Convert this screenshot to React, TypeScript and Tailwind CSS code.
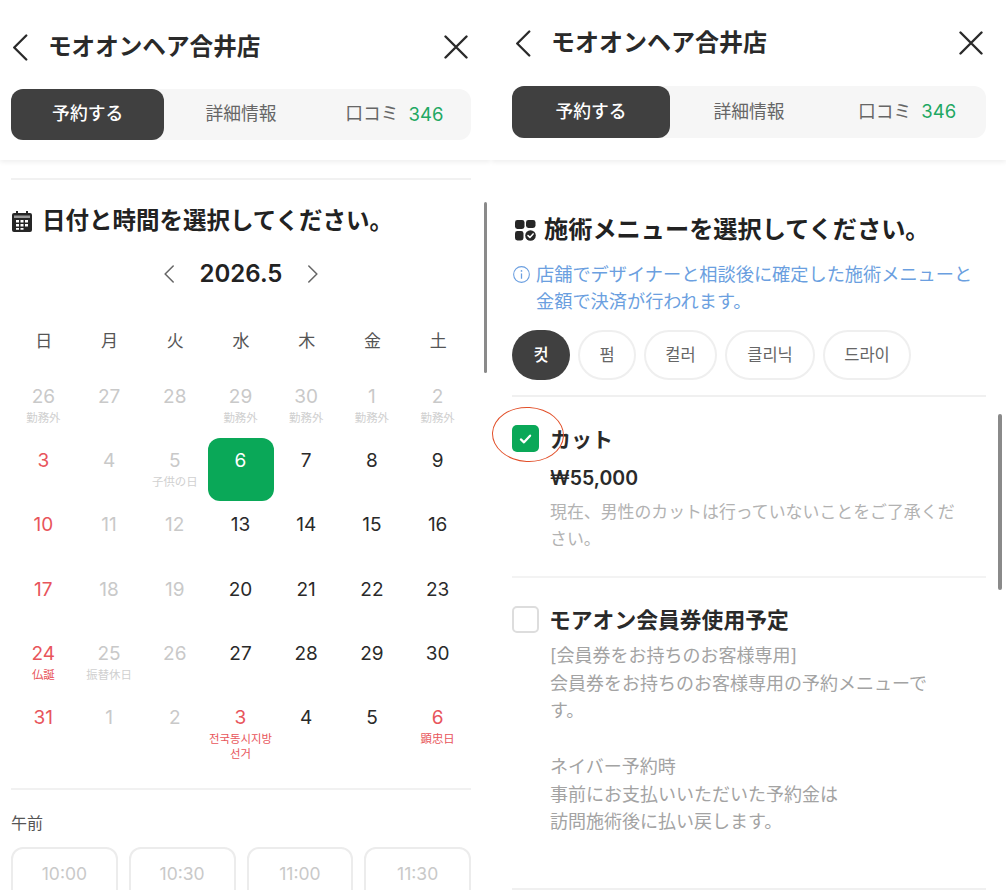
const weekdays = ['日', '月', '火', '水', '木', '金', '土']

type Tone = 'off' | 'on' | 'red' | 'selected'
type Day = { d: number; tone: Tone; label?: string[] }

const weeks: Day[][] = [
  [
    { d: 26, tone: 'off', label: ['勤務外'] },
    { d: 27, tone: 'off' },
    { d: 28, tone: 'off' },
    { d: 29, tone: 'off', label: ['勤務外'] },
    { d: 30, tone: 'off', label: ['勤務外'] },
    { d: 1, tone: 'off', label: ['勤務外'] },
    { d: 2, tone: 'off', label: ['勤務外'] },
  ],
  [
    { d: 3, tone: 'red' },
    { d: 4, tone: 'off' },
    { d: 5, tone: 'off', label: ['子供の日'] },
    { d: 6, tone: 'selected' },
    { d: 7, tone: 'on' },
    { d: 8, tone: 'on' },
    { d: 9, tone: 'on' },
  ],
  [
    { d: 10, tone: 'red' },
    { d: 11, tone: 'off' },
    { d: 12, tone: 'off' },
    { d: 13, tone: 'on' },
    { d: 14, tone: 'on' },
    { d: 15, tone: 'on' },
    { d: 16, tone: 'on' },
  ],
  [
    { d: 17, tone: 'red' },
    { d: 18, tone: 'off' },
    { d: 19, tone: 'off' },
    { d: 20, tone: 'on' },
    { d: 21, tone: 'on' },
    { d: 22, tone: 'on' },
    { d: 23, tone: 'on' },
  ],
  [
    { d: 24, tone: 'red', label: ['仏誕'] },
    { d: 25, tone: 'off', label: ['振替休日'] },
    { d: 26, tone: 'off' },
    { d: 27, tone: 'on' },
    { d: 28, tone: 'on' },
    { d: 29, tone: 'on' },
    { d: 30, tone: 'on' },
  ],
  [
    { d: 31, tone: 'red' },
    { d: 1, tone: 'off' },
    { d: 2, tone: 'off' },
    { d: 3, tone: 'red', label: ['전국동시지방', '선거'] },
    { d: 4, tone: 'on' },
    { d: 5, tone: 'on' },
    { d: 6, tone: 'red', label: ['顕忠日'] },
  ],
]

const toneText: Record<Tone, string> = {
  off: 'text-[#c9c9c9]',
  on: 'text-[#2a2a2a]',
  red: 'text-[#e8555b]',
  selected: 'text-white',
}

const toneLabel: Record<Tone, string> = {
  off: 'text-[#d0d0d0]',
  on: 'text-[#2a2a2a]',
  red: 'text-[#e8555b]',
  selected: 'text-white',
}

function Chevron({ dir, className }: { dir: 'left' | 'right'; className: string }) {
  return (
    <svg viewBox="0 0 16 28" className={className} fill="none" stroke="currentColor" strokeWidth="2.4" strokeLinecap="round" strokeLinejoin="round">
      <path d={dir === 'left' ? 'M14.5 1.5 2 14l12.5 12.5' : 'M1.5 1.5 14 14 1.5 26.5'} />
    </svg>
  )
}

function Header({ tall }: { tall: boolean }) {
  return (
    <div className="h-[160px] shadow-[0_2px_5px_rgba(0,0,0,0.07)]">
      <div className={tall ? 'flex h-[89px] items-center pt-[5px] pl-[11px] pr-[20px]' : 'flex h-[86px] items-center pl-[21px] pr-[20px]'}>
        <Chevron dir="left" className={tall ? 'ml-[1px] h-[27px] w-[16px] text-[#2a2a2a]' : 'ml-[3px] h-[27px] w-[16px] text-[#2a2a2a]'} />
        <span className={tall ? 'ml-[20px] text-[23.6px] font-semibold text-[#2a2a2a]' : 'ml-[20px] text-[24px] font-semibold text-[#2a2a2a]'}>モオオンヘア合井店</span>
        <svg viewBox="0 0 24 24" className="ml-auto mr-[3px] h-[24px] w-[24px] text-[#2a2a2a]" fill="none" stroke="currentColor" strokeWidth="2.4" strokeLinecap="round">
          <path d="M1.5 1.5 22.5 22.5M22.5 1.5 1.5 22.5" />
        </svg>
      </div>
      <div className={tall ? 'ml-[11px] mr-[20px] grid h-[51px] grid-cols-3 rounded-[12px] bg-[#f6f6f6]' : 'ml-[21px] mr-[20px] grid h-[52px] grid-cols-3 rounded-[12px] bg-[#f6f6f6]'}>
        <div className="flex items-center justify-center rounded-[12px] bg-[#404040] text-[17.8px] font-medium text-white">予約する</div>
        <div className="flex items-center justify-center text-[17.8px] text-[#666666]">詳細情報</div>
        <div className="flex items-center justify-center gap-[10px] text-[17.8px] text-[#666666]">
          <span>口コミ</span>
          <span className="text-[18.5px] text-[#1fa863]">346</span>
        </div>
      </div>
    </div>
  )
}

function CalendarPanel() {
  return (
    <div className="relative h-[890px] w-[491px] shrink-0 overflow-hidden">
      <Header tall />
      <div className="pl-[11px] pr-[20px]">
        <div className="mt-[18px] h-[2px] bg-[#f1f1f1]" />
        <div className="mt-[25px] flex h-[32px] items-center">
          <svg viewBox="0 0 20 21" className="ml-[1px] h-[21px] w-[20px]">
            <path fill="#262626" d="M4 0h2v2h8V0h2v2h2a2 2 0 0 1 2 2v15a2 2 0 0 1-2 2H2a2 2 0 0 1-2-2V4a2 2 0 0 1 2-2h2Z" />
            <path fill="#9a9a9a" d="M2 4.5h16V7H2z" />
            <path fill="#fff" d="M4 9h3v2.5H4zM8.5 9h3v2.5h-3zM13 9h3v2.5h-3zM4 13h3v2.5H4zM8.5 13h3v2.5h-3zM13 13h3v2.5h-3zM4 17h3v1.8H4zM8.5 17h3v1.8h-3z" />
          </svg>
          <h2 className="ml-[10px] text-[23.5px] font-semibold text-[#222222]">日付と時間を選択してください。</h2>
        </div>
        <div className="mt-[21px] flex h-[32px] items-center justify-center">
          <Chevron dir="left" className="h-[18px] w-[12px] text-[#666666]" />
          <span className="mx-[25px] text-[24px] font-semibold text-[#222222]">2026.5</span>
          <Chevron dir="right" className="h-[18px] w-[12px] text-[#666666]" />
        </div>
        <div className="mt-[39px] grid h-[24px] grid-cols-7 items-center text-center text-[17px] text-[#555555]">
          {weekdays.map((w) => (
            <span key={w}>{w}</span>
          ))}
        </div>
        <div className="mt-[20px]">
          {weeks.map((week, i) => (
            <div key={i} className="grid h-[64.2px] grid-cols-7">
              {week.map((day, j) => (
                <div key={j} className={day.tone === 'selected' ? 'mt-[1px] rounded-[12px] bg-[#0aa858] pr-[1px] pt-[11px] text-center' : 'pr-[1px] pt-[12px] text-center'}>
                  <div className={`text-[19px] leading-[24px] ${toneText[day.tone]}`}>{day.d}</div>
                  {day.label && (
                    <div className={`-mx-[2px] mt-[2px] whitespace-nowrap text-[11.4px] leading-[15px] ${toneLabel[day.tone]}`}>
                      {day.label.map((line) => (
                        <div key={line}>{line}</div>
                      ))}
                    </div>
                  )}
                </div>
              ))}
            </div>
          ))}
        </div>
        <div className="mt-[30px] h-[2px] bg-[#f1f1f1]" />
        <div className="mt-[21px] text-[16px] leading-[24px] text-[#555555]">午前</div>
        <div className="mt-[12px] grid grid-cols-4 gap-[11px]">
          {['10:00', '10:30', '11:00', '11:30'].map((t) => (
            <div key={t} className="flex h-[54px] items-center justify-center rounded-[12px] border-2 border-[#ececec] text-[17.5px] text-[#c9c9c9]">{t}</div>
          ))}
        </div>
      </div>
      <div className="absolute left-[484px] top-[202px] h-[171px] w-[3px] rounded-full bg-[#8a8a8a]" />
    </div>
  )
}

function CheckBox({ on }: { on: boolean }) {
  if (on) {
    return (
      <div className="flex h-[27px] w-[27px] shrink-0 items-center justify-center rounded-[5px] bg-[#0aa858]">
        <svg viewBox="0 0 14 12" className="h-[10px] w-[13px]" fill="none" stroke="#fff" strokeWidth="2.7" strokeLinecap="round" strokeLinejoin="round">
          <path d="M1.5 6.5 5.2 10 12.5 2" />
        </svg>
      </div>
    )
  }
  return <div className="h-[27px] w-[27px] shrink-0 rounded-[5px] border-2 border-[#dddddd]" />
}

function MenuPanel() {
  return (
    <div className="relative h-[890px] flex-1 overflow-hidden">
      <Header tall={false} />
      <div className="pl-[21px] pr-[20px]">
        <div className="mt-[54px] flex h-[32px] items-center">
          <svg viewBox="0 0 21 21" className="ml-[3px] h-[21px] w-[21px] text-[#262626]" fill="currentColor">
            <rect x="0" y="0" width="9.5" height="9" rx="2.4" />
            <rect x="11" y="0" width="9.5" height="8" rx="2.4" />
            <rect x="0" y="11" width="8.5" height="9.5" rx="2.4" />
            <circle cx="15.5" cy="15.5" r="5.3" />
            <path d="m13 15.6 1.9 1.8 3.2-3.5" fill="none" stroke="#fff" strokeWidth="1.5" strokeLinecap="round" strokeLinejoin="round" />
          </svg>
          <h2 className="ml-[8px] text-[24.2px] font-semibold text-[#222222]">施術メニューを選択してください。</h2>
        </div>
        <div className="mt-[15px] flex text-[18.2px] leading-[27px] text-[#6b9fe0]">
          <svg viewBox="0 0 16 16" className="ml-[1px] mt-[5px] h-[17px] w-[17px] shrink-0" fill="none" stroke="currentColor" strokeWidth="1">
            <circle cx="8" cy="8" r="7.4" />
            <path d="M8 7v5" strokeWidth="1.2" />
            <circle cx="8" cy="4.6" r="0.8" fill="currentColor" stroke="none" />
          </svg>
          <p className="ml-[6px]">
            店舗でデザイナーと相談後に確定した施術メニューと<br />金額で決済が行われます。
          </p>
        </div>
        <div className="mt-[15px] flex gap-[8px]">
          <div className="flex h-[50px] w-[58px] items-center justify-center rounded-full bg-[#404040] text-[16.5px] font-medium text-white">컷</div>
          <div className="flex h-[50px] w-[58px] items-center justify-center rounded-full border-2 border-[#efefef] text-[16.5px] text-[#666666]">펌</div>
          <div className="flex h-[50px] w-[73px] items-center justify-center rounded-full border-2 border-[#efefef] text-[16.5px] text-[#666666]">컬러</div>
          <div className="flex h-[50px] w-[90px] items-center justify-center rounded-full border-2 border-[#efefef] text-[16.5px] text-[#666666]">클리닉</div>
          <div className="flex h-[50px] w-[88px] items-center justify-center rounded-full border-2 border-[#efefef] text-[16.5px] text-[#666666]">드라이</div>
        </div>
        <div className="mt-[15px] h-[2px] bg-[#f0f0f0]" />
        <div className="flex gap-[11px] pt-[28px]">
          <CheckBox on />
          <div className="min-w-0">
            <div className="text-[21px] font-semibold leading-[30px] text-[#2a2a2a]">カット</div>
            <div className="mt-[8px] text-[19.5px] font-semibold leading-[30px] text-[#2a2a2a]">₩55,000</div>
            <p className="mt-[6px] text-[16.9px] leading-[27px] text-[#b2b2b2]">
              現在、男性のカットは行っていないことをご了承くだ<br />さい。
            </p>
          </div>
        </div>
        <div className="mt-[23px] h-[2px] bg-[#f3f3f3]" />
        <div className="flex gap-[11px] pt-[28px]">
          <CheckBox on={false} />
          <div className="-mt-[1px] min-w-0">
            <div className="-ml-[1px] text-[21.8px] font-semibold leading-[30px] text-[#2a2a2a]">モアオン会員券使用予定</div>
            <p className="mt-[7px] text-[18px] leading-[27.7px] text-[#a3a3a3]">
              [会員券をお持ちのお客様専用]<br />
              会員券をお持ちのお客様専用の予約メニューで<br />
              す。<br />
              <br />
              ネイバー予約時<br />
              事前にお支払いいただいた予約金は<br />
              訪問施術後に払い戻します。
            </p>
          </div>
        </div>
      </div>
      <div className="absolute left-[507px] top-[414px] h-[176px] w-[4px] rounded-full bg-[#8a8a8a]" />
      <div className="absolute left-[1px] top-[407px] h-[55px] w-[72px] rotate-[3deg] rounded-[50%] border-[1.5px] border-[#e2502a]" />
      <div className="absolute left-[21px] top-[888px] h-[2px] w-[474px] bg-[#f0f0f0]" />
    </div>
  )
}

export default function App() {
  return (
    <div className="flex h-[890px] w-[1006px] overflow-hidden bg-white font-['Inter','Noto_Sans_CJK_JP',sans-serif]">
      <CalendarPanel />
      <MenuPanel />
    </div>
  )
}
